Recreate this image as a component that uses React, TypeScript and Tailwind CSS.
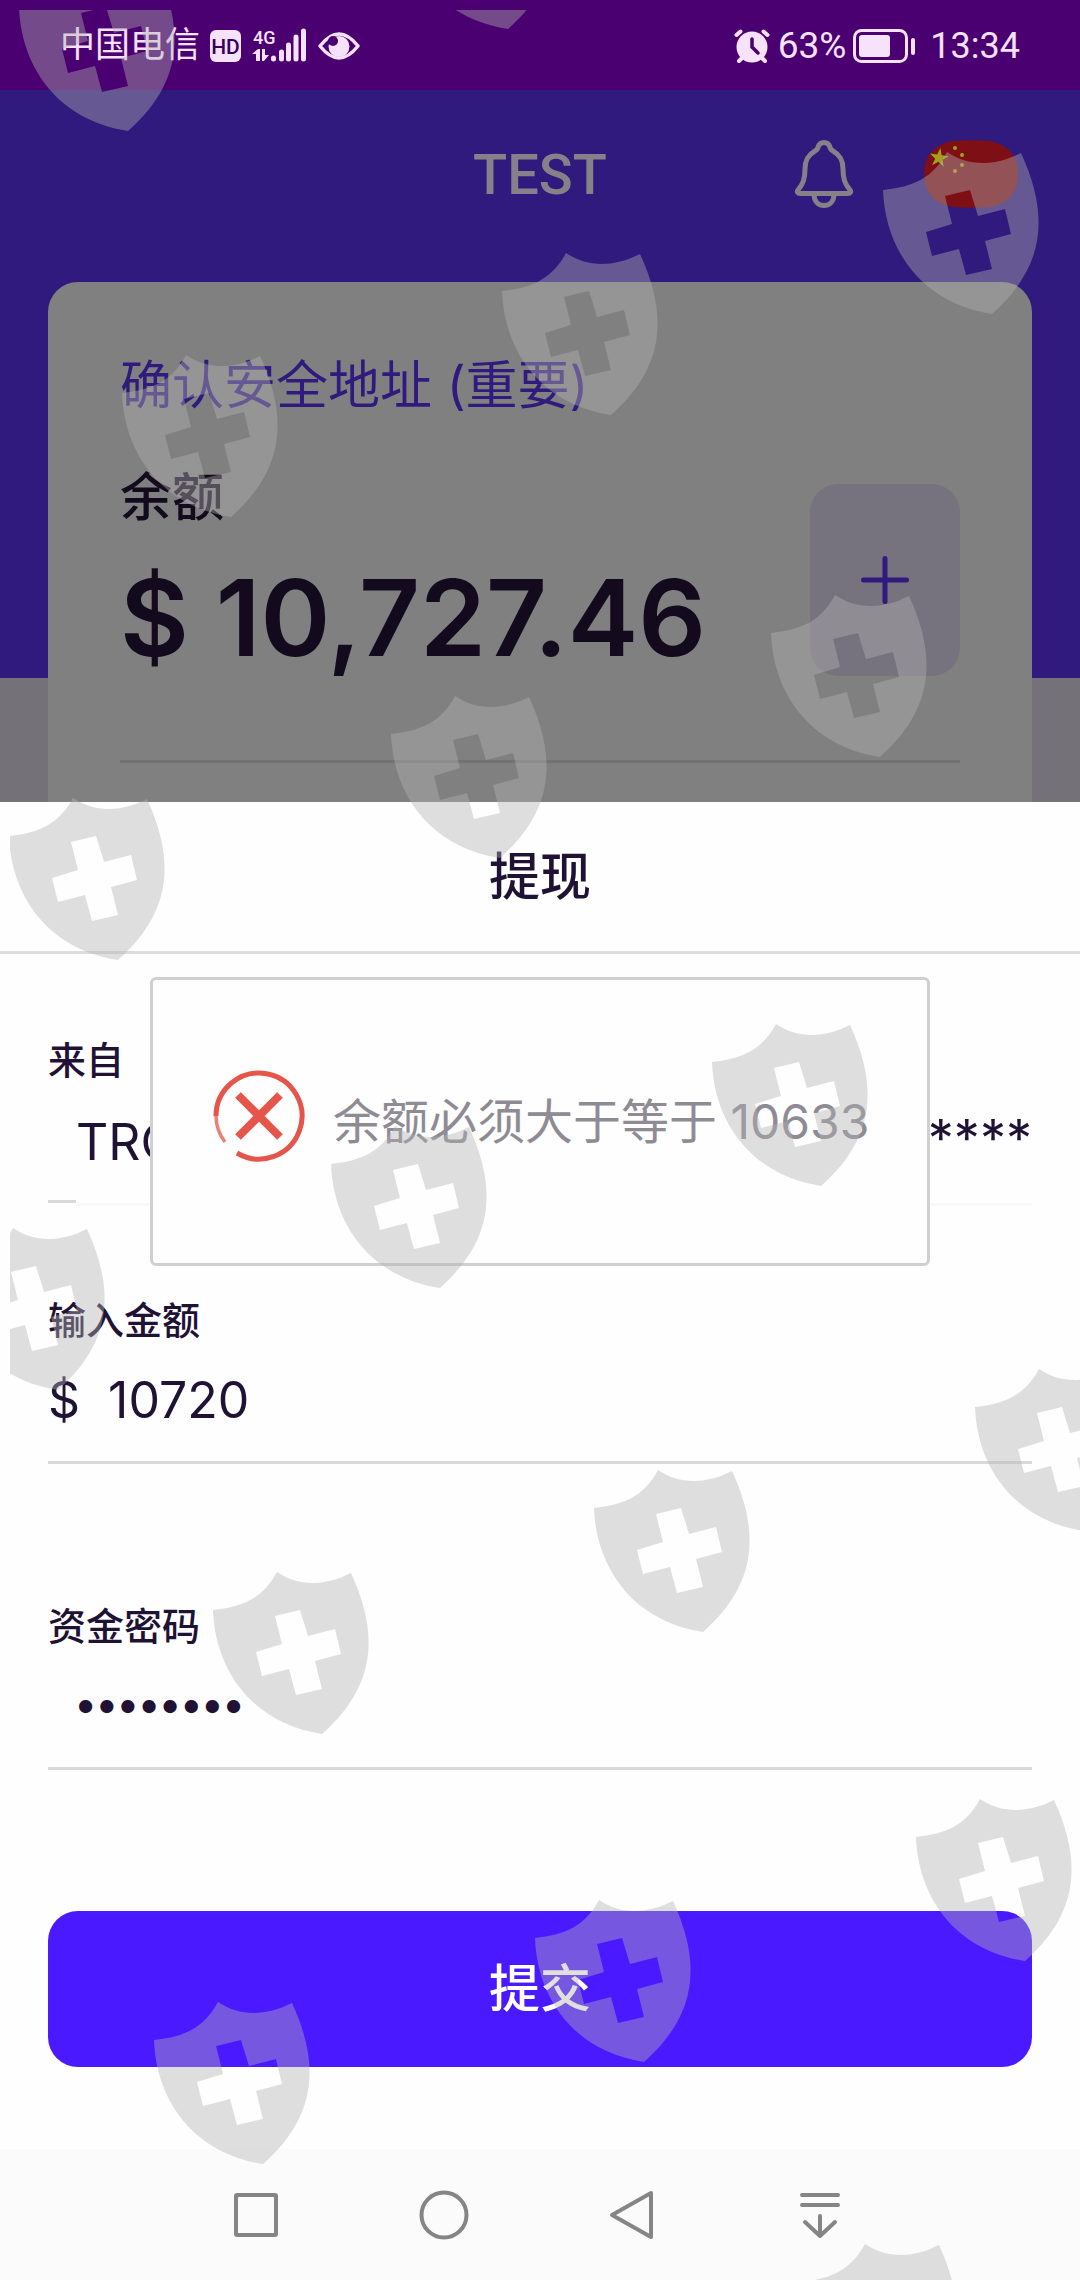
import React from "react";

const CJK = "font-['Inter','Noto_Sans_CJK_SC',sans-serif]";

const SHIELD =
  "M64 1C85 15 110 16 138 2C167 65 162 116 109 163C38 152 2 98 0 39C30 36 50 27 64 1Z" +
  "M62 45L69 73L43 81L49 105L76 98L83 124L109 118L102 90L128 83L122 58L95 65L87 39Z";

const SHIELDS: [number, number][] = [
  [19, -32], [399, -134], [883, 151], [502, 252], [122, 354], [771, 594],
  [391, 695], [9, 797], [712, 1023], [331, 1125], [-51, 1227], [975, 1368],
  [594, 1469], [213, 1571], [916, 1798], [535, 1899], [154, 2001], [801, 2243],
];

function Watermark() {
  return (
    <svg
      className="pointer-events-none absolute inset-0 z-20 h-full w-full"
      viewBox="0 0 1080 2280"
      preserveAspectRatio="xMinYMin slice"
      aria-hidden="true"
    >
      <clipPath id="area">
        <rect x="10" y="10" width="1070" height="2270" />
      </clipPath>
      <g clipPath="url(#area)" fill="#b2b2b2" fillOpacity="0.417" fillRule="evenodd">
        {SHIELDS.map(([x, y]) => (
          <path key={`${x}:${y}`} d={SHIELD} transform={`translate(${x} ${y})`} />
        ))}
      </g>
    </svg>
  );
}

function StatusBar() {
  return (
    <div className="flex h-[90px] shrink-0 items-center justify-between bg-[#4a0070] px-[60px] pt-[2px] font-['Roboto','Noto_Sans_CJK_SC',sans-serif] text-[#f6e2fb]">
      <div className="flex items-center">
        <span className="text-[35px] leading-[40px]">中国电信</span>
        <svg className="ml-[10px] h-[40px] w-[150px]" viewBox="0 0 150 40" fill="currentColor" aria-label="HD 4G">
          <rect x="0" y="4" width="31" height="32" rx="6" />
          <text x="15.5" y="28" textAnchor="middle" fontSize="21" fontWeight="500" fill="#3a0060">HD</text>
          <text x="43" y="18" fontSize="18" fontWeight="500">4G</text>
          <path d="M42 28L48 23H50V35H46V28ZM52 23H55V29H59L54 35H52Z" />
          <g stroke="currentColor" strokeWidth="5" strokeLinecap="round">
            <path d="M63.500 32V33M71.500 26V33M78.500 19V33M86 11V33M93.500 5V33" />
          </g>
          <path d="M110 20Q129 -4 148 20Q129 44 110 20Z" fill="none" stroke="currentColor" strokeWidth="3.500" strokeLinejoin="round" />
          <circle cx="129" cy="20.500" r="10.500" />
          <circle cx="123" cy="15" r="5" fill="#4a0070" />
        </svg>
      </div>
      <div className="flex items-center">
        <svg className="h-[36px] w-[36px]" viewBox="0 0 36 36" fill="none" stroke="currentColor" strokeLinecap="round" aria-label="闹钟">
          <circle cx="18" cy="19" r="15.500" fill="currentColor" stroke="none" />
          <path d="M2.500 7L6.500 3.500M33.500 7L29.500 3.500M5 33L8 30M31 33L28 30" strokeWidth="4" />
          <path d="M18 11V19L24 25" stroke="#4a0070" strokeWidth="3.500" />
        </svg>
        <span className="ml-[8px] text-[37px] leading-[40px]">63%</span>
        <svg className="ml-[6px] h-[36px] w-[66px]" viewBox="0 0 66 36" fill="none" aria-label="电池">
          <rect x="2.500" y="2.500" width="52" height="31" rx="7" stroke="currentColor" strokeWidth="3" />
          <rect x="7" y="7" width="31" height="22" rx="3" fill="currentColor" />
          <rect x="59" y="10" width="4" height="17" rx="2" fill="currentColor" />
        </svg>
        <span className="ml-[12px] text-[36px] leading-[40px]">13:34</span>
      </div>
    </div>
  );
}

const STAR = "M0 -10L2.300 -3.100H9.500L3.700 1.200L5.900 8.100L0 3.800L-5.900 8.100L-3.700 1.200L-9.500 -3.100H-2.300Z";

function Header() {
  return (
    <header className="grid h-[588px] grid-cols-[1fr_auto_1fr] items-start bg-[#301a7d] px-[60px]">
      <h1 className="col-start-2 mt-[48px] font-['Roboto',sans-serif] text-[56px] leading-[74px] font-medium text-[#868089]">TEST</h1>
      <div className="mt-[48px] flex justify-end gap-[68px]">
        <button type="button" aria-label="通知">
          <svg className="h-[72px] w-[60px]" viewBox="0 0 60 72" fill="none" stroke="#868089" strokeWidth="5" strokeLinejoin="round">
            <path d="M30 4.500C27 4.500 25 6 24 9C24 11 22.500 12 21 13C14 17 11 22 11 31C11 41 9 46 4 52C2.500 54 4 55.500 6 55.500H54C56 55.500 57.500 54 56 52C51 46 49 41 49 31C49 22 46 17 39 13C37.500 12 36 11 36 9C35 6 33 4.500 30 4.500Z" />
            <path d="M20 56C20 63 24 67.500 30 67.500S40 63 40 56" />
          </svg>
        </button>
        <button type="button" aria-label="中文">
          <svg className="h-[72px] w-[98px]" viewBox="0 0 98 72">
            <path d="M30 3Q49 1.500 68 3Q96 9 96 36Q96 63 68 69Q49 70.500 30 69Q2 63 2 36Q2 9 30 3Z" fill="#7e0f14" />
            <g fill="#a3a01c">
              <path d={STAR} transform="translate(17 20) rotate(8)" />
              <circle cx="33" cy="10" r="2" />
              <circle cx="40" cy="17" r="2" />
              <circle cx="40" cy="27" r="2" />
              <circle cx="33" cy="33" r="2" />
            </g>
          </svg>
        </button>
      </div>
    </header>
  );
}

function BalanceCard() {
  return (
    <section className="relative mx-[48px] -mt-[396px] h-[600px] rounded-[30px] bg-[#808080] px-[72px] pt-[68px]">
      <a href="#address" className="block text-[52px] leading-[72px] text-[#301a7d]">确认安全地址 (重要)</a>
      <div className="mt-[38px] flex items-start justify-between border-b-[3px] border-[#727272] pb-[80px]">
        <div>
          <p className="text-[52px] leading-[76px] font-medium text-[#130a1e]">余额</p>
          <p className="mt-[20px] text-[106px] leading-[124px] font-semibold whitespace-nowrap text-[#130a1e]">$ 10,727.46</p>
        </div>
        <button type="button" aria-label="添加" className="mt-[24px] flex h-[192px] w-[150px] items-center justify-center rounded-[28px] bg-[#77737e]">
          <svg className="h-[48px] w-[48px]" viewBox="0 0 48 48" stroke="#301a7d" strokeWidth="5" strokeLinecap="round">
            <path d="M24 2.500V45.500M2.500 24H45.500" />
          </svg>
        </button>
      </div>
    </section>
  );
}

function Toast() {
  return (
    <div role="alert" className="absolute inset-x-[150px] top-[175px] z-10 flex h-[289px] items-center rounded-[6px] border-[3px] border-[#d0d0d0] bg-[#fefefe] pl-[60px]">
      <svg className="mb-[12px] h-[92px] w-[92px] shrink-0" viewBox="0 0 92 92" fill="none" stroke="#e5554a" aria-hidden="true">
        <path d="M3 46A43 43 0 1 1 24 83" strokeWidth="5" />
        <path d="M3 46A43 43 0 0 0 12 72" strokeWidth="3.500" strokeOpacity="0.750" />
        <path d="M25 25L67 67M67 25L25 67" strokeWidth="8" />
      </svg>
      <p className="ml-[28px] text-[48px] leading-[72px] whitespace-nowrap text-[#8f8b95]">余额必须大于等于 10633</p>
    </div>
  );
}

function WithdrawSheet() {
  return (
    <main className="relative flex grow flex-col bg-[#fefefe] text-[#1f1235]">
      <h2 className="h-[152px] border-b-[3px] border-[#dddddd] text-center text-[51px] leading-[150px] font-medium">提现</h2>
      <Toast />
      <form className="flex flex-col px-[48px] pt-[80px]">
        <label htmlFor="source" className="text-[38px] leading-[52px] font-medium">来自</label>
        <div className="border-b-[3px] border-[#d9d9d9] pl-[28px]">
          <button id="source" type="button" className="-mb-[6px] flex h-[120px] w-full items-center justify-between overflow-hidden border-b-[3px] border-[#f7f7f7] bg-[#fefefe] pb-[4px] text-[50px]">
            <span>TRC</span>
            <span className="pb-[8px] text-[52px]">******</span>
          </button>
        </div>
        <label htmlFor="amount" className="mt-[91px] text-[38px] leading-[52px] font-medium">输入金额</label>
        <div className="flex h-[118px] items-center gap-[28px] border-b-[3px] border-[#d9d9d9] pb-[6px] text-[50px]">
          <span>$</span>
          <input id="amount" defaultValue="10720" inputMode="decimal" className="min-w-0 grow bg-transparent outline-none" />
        </div>
        <label htmlFor="password" className="mt-[136px] text-[38px] leading-[52px] font-medium">资金密码</label>
        <div className="flex h-[118px] items-center border-b-[3px] border-[#d9d9d9] pb-[12px] pl-[27px]">
          <input id="password" type="password" defaultValue="12345678" className="min-w-0 grow bg-transparent text-[42px] font-semibold outline-none" />
        </div>
        <button type="submit" className="mt-[141px] h-[156px] rounded-[30px] bg-[#4b19ff] text-[51px] font-medium text-white">提交</button>
      </form>
    </main>
  );
}

function NavBar() {
  const item = "flex w-[188px] items-center justify-center";
  const icon = "h-[54px] w-[54px]";
  const props = { viewBox: "0 0 54 54", fill: "none", stroke: "#858585", strokeWidth: 4, strokeLinejoin: "round", strokeLinecap: "round" } as const;
  return (
    <nav className="flex h-[131px] shrink-0 justify-center bg-[#fbfbfb] pr-[4px]">
      <button type="button" aria-label="最近任务" className={item}>
        <svg className={icon} {...props}><rect x="7" y="7" width="40" height="40" rx="1" /></svg>
      </button>
      <button type="button" aria-label="主页" className={item}>
        <svg className={icon} {...props}><circle cx="27" cy="27" r="22.500" /></svg>
      </button>
      <button type="button" aria-label="返回" className={item}>
        <svg className={icon} {...props}><path d="M46 5L7 27L46 49Z" /></svg>
      </button>
      <button type="button" aria-label="通知栏" className={item}>
        <svg className={icon} {...props}><path d="M9 7H45M9 17H45M27 28V48M12 34L27 48L42 34" /></svg>
      </button>
    </nav>
  );
}

export default function App() {
  return (
    <div className={`relative flex min-h-screen flex-col overflow-hidden ${CJK}`}>
      <StatusBar />
      <div className="h-[712px] shrink-0 overflow-hidden bg-[#747278]">
        <Header />
        <BalanceCard />
      </div>
      <WithdrawSheet />
      <NavBar />
      <Watermark />
    </div>
  );
}
